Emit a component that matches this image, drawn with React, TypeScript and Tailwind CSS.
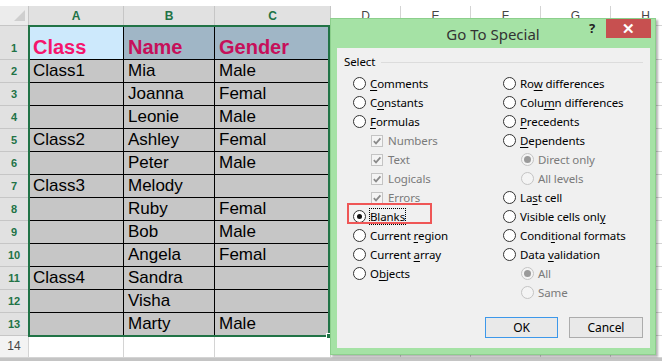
import clsx from 'clsx'

const dataRows = [
  ['Class1', 'Mia', 'Male'],
  ['', 'Joanna', 'Femal'],
  ['', 'Leonie', 'Male'],
  ['Class2', 'Ashley', 'Femal'],
  ['', 'Peter', 'Male'],
  ['Class3', 'Melody', ''],
  ['', 'Ruby', 'Femal'],
  ['', 'Bob', 'Male'],
  ['', 'Angela', 'Femal'],
  ['Class4', 'Sandra', ''],
  ['', 'Visha', ''],
  ['', 'Marty', 'Male'],
]

const colWidths = ['w-[95px]', 'w-[91px]', 'w-[116px]']
const otherCols = ['D', 'E', 'F', 'G', 'H']

type Item = {
  label: string
  u?: number
  kind: 'radio' | 'check' | 'sub'
  checked?: boolean
  disabled?: boolean
  focus?: boolean
  highlight?: boolean
}

const leftItems: Item[] = [
  { label: 'Comments', u: 0, kind: 'radio' },
  { label: 'Constants', u: 1, kind: 'radio' },
  { label: 'Formulas', u: 0, kind: 'radio' },
  { label: 'Numbers', kind: 'check', checked: true, disabled: true },
  { label: 'Text', kind: 'check', checked: true, disabled: true },
  { label: 'Logicals', kind: 'check', checked: true, disabled: true },
  { label: 'Errors', kind: 'check', checked: true, disabled: true },
  { label: 'Blanks', u: 4, kind: 'radio', checked: true, focus: true, highlight: true },
  { label: 'Current region', u: 8, kind: 'radio' },
  { label: 'Current array', u: 8, kind: 'radio' },
  { label: 'Objects', u: 1, kind: 'radio' },
]

const rightItems: Item[] = [
  { label: 'Row differences', u: 2, kind: 'radio' },
  { label: 'Column differences', u: 4, kind: 'radio' },
  { label: 'Precedents', u: 0, kind: 'radio' },
  { label: 'Dependents', u: 0, kind: 'radio' },
  { label: 'Direct only', kind: 'sub', checked: true, disabled: true },
  { label: 'All levels', kind: 'sub', disabled: true },
  { label: 'Last cell', u: 2, kind: 'radio' },
  { label: 'Visible cells only', u: 17, kind: 'radio' },
  { label: 'Conditional formats', u: 5, kind: 'radio' },
  { label: 'Data validation', u: 5, kind: 'radio' },
  { label: 'All', kind: 'sub', checked: true, disabled: true },
  { label: 'Same', kind: 'sub', disabled: true },
]

function Label({ text, u }: { text: string; u?: number }) {
  if (u === undefined) return <>{text}</>
  return (
    <>
      {text.slice(0, u)}
      <span className="underline underline-offset-2">{text[u]}</span>
      {text.slice(u + 1)}
    </>
  )
}

function Radio({ checked, disabled }: { checked?: boolean; disabled?: boolean }) {
  return (
    <span
      className={clsx(
        'flex h-[13px] w-[13px] shrink-0 items-center justify-center rounded-full border',
        disabled ? 'border-[#c4c4c4] bg-[#f4f4f4]' : 'border-[#333] bg-white'
      )}
    >
      {checked &&
        (disabled ? (
          <span className="h-[7px] w-[7px] rounded-full bg-[#9a9a9a]" />
        ) : (
          <span className="h-[5px] w-[5px] rounded-full bg-[#111]" />
        ))}
    </span>
  )
}

function Check() {
  return (
    <span className="flex h-[12px] w-[12px] shrink-0 items-center justify-center border border-[#c4c4c4] bg-[#f4f4f4]">
      <svg width="10" height="10" viewBox="0 0 10 10">
        <path d="M1.8 5.2 L4 7.4 L8.4 2.4" fill="none" stroke="#8a8a8a" strokeWidth="1.7" />
      </svg>
    </span>
  )
}

function Option({ item }: { item: Item }) {
  return (
    <div
      className={clsx(
        'relative flex h-[19px] items-center',
        item.kind === 'check' ? 'gap-[5px] pl-[18px]' : item.kind === 'sub' ? 'gap-[4px] pl-[18px]' : 'gap-[4px]',
        item.disabled ? 'text-[#7a7a7a]' : 'text-black'
      )}
    >
      {item.kind === 'check' ? <Check /> : <Radio checked={item.checked} disabled={item.disabled} />}
      <span className={clsx('leading-[15px]', item.focus && '-ml-[1px] border border-dotted border-black')}>
        <Label text={item.label} u={item.u} />
      </span>
      {item.highlight && (
        <div className="pointer-events-none absolute -left-[6px] -top-[4px] h-[21px] w-[85px] border-2 border-[#ef5656]" />
      )}
    </div>
  )
}

function Dialog() {
  return (
    <div className="absolute left-[330px] top-[18px] flex h-[337px] w-[326px] flex-col border border-[#8ccf8c] bg-[#a5e2a5] font-['Noto_Sans',sans-serif] shadow-[2px_2px_2px_rgba(0,0,0,0.3)]">
      {/* title bar */}
      <div className="grid h-[29px] grid-cols-[1fr_auto_1fr] items-center">
        <div />
        <div className="pt-[1px] text-[15px] text-[#333]">Go To Special</div>
        <div className="flex items-start justify-end self-start pr-[4px]">
          <div className="flex h-[19px] w-[20px] items-center justify-center text-[13px] font-bold text-[#222]">?</div>
          <div className="ml-[4px] flex h-[19px] w-[45px] items-center justify-center bg-[#c75050] text-[15px] font-bold leading-none text-white">
            ✕
          </div>
        </div>
      </div>

      {/* content */}
      <div className="mb-[6px] ml-[6px] mr-[5px] flex flex-1 flex-col bg-[#f0f0f0] text-[11.5px] tracking-[-0.1px]">
        <div className="mt-[5px] flex h-[18px] items-center pl-[7px] pr-[7px]">
          <span className="text-black">Select</span>
          <div className="ml-[6px] h-px flex-1 bg-[#dcdcdc]" />
        </div>

        <div className="mt-[3px] grid grid-cols-[166px_1fr]">
          <div className="flex flex-col pl-[16px]">
            {leftItems.map((it) => (
              <Option key={it.label} item={it} />
            ))}
          </div>
          <div className="flex flex-col">
            {rightItems.map((it) => (
              <Option key={it.label + it.kind} item={it} />
            ))}
          </div>
        </div>

        <div className="mt-[15px] flex justify-end gap-[11px] pr-[7px]">
          <button className="flex h-[21px] w-[73px] items-center justify-center border border-[#3d98ea] bg-[#e9e9e9] text-[12px] text-black">
            OK
          </button>
          <button className="flex h-[21px] w-[74px] items-center justify-center border border-[#acacac] bg-[#e9e9e9] text-[12px] text-black">
            Cancel
          </button>
        </div>
      </div>
    </div>
  )
}

export default function App() {
  return (
    <div className="relative h-[361px] w-[662px] overflow-hidden bg-white font-['Liberation_Sans',Arial,sans-serif]">
      <div className="h-[6px]" />

      {/* column headers */}
      <div className="flex h-[20px]">
        <div className="flex w-[29px] shrink-0 items-end justify-end border-r border-b border-[#c6c6c6] bg-[#ececec] pb-[4px] pr-[3px]">
          <svg width="11" height="11" viewBox="0 0 11 11">
            <polygon points="11,0 11,11 0,11" fill="#cfcfcf" />
          </svg>
        </div>
        {['A', 'B', 'C'].map((c, i) => (
          <div
            key={c}
            className={clsx(
              colWidths[i],
              'flex shrink-0 items-center justify-center border-r border-[#c6c6c6] bg-[#e1e1e1] text-[12px] font-bold text-[#217346]'
            )}
          >
            {c}
          </div>
        ))}
        {otherCols.map((c) => (
          <div
            key={c}
            className="flex w-[70px] shrink-0 items-center justify-center border-r border-b border-[#d4d4d4] text-[12px] text-[#444]"
          >
            {c}
          </div>
        ))}
      </div>

      {/* row 1 */}
      <div className="flex h-[34px]">
        <div className="flex w-[29px] shrink-0 items-end justify-center border-r border-b border-[#c6c6c6] bg-[#e1e1e1] pb-[4px] text-[11px] font-bold leading-[13px] text-[#217346]">
          1
        </div>
        <div className="flex w-[95px] shrink-0 items-end border-r border-b border-black bg-[#cde9fc] pb-[1px] pl-[4px] text-[20px] font-bold leading-[22px] text-[#f5156c]">
          Class
        </div>
        <div className="flex w-[91px] shrink-0 items-end border-r border-b border-black bg-[#a0b6c6] pb-[1px] pl-[4px] text-[20px] font-bold leading-[22px] text-[#c60f5a]">
          Name
        </div>
        <div className="flex w-[116px] shrink-0 items-end border-r border-b border-black bg-[#a0b6c6] pb-[1px] pl-[4px] text-[20px] font-bold leading-[22px] text-[#c60f5a]">
          Gender
        </div>
        {otherCols.map((c) => (
          <div key={c} className="w-[70px] shrink-0 border-r border-b border-[#d4d4d4]" />
        ))}
      </div>

      {/* rows 2-13 */}
      {dataRows.map((r, ri) => (
        <div key={ri} className="flex h-[23px]">
          <div className="flex w-[29px] shrink-0 items-end justify-center border-r border-b border-[#c6c6c6] bg-[#e1e1e1] pb-[4px] text-[11px] font-bold leading-[13px] text-[#217346]">
            {ri + 2}
          </div>
          {r.map((v, ci) => (
            <div
              key={ci}
              className={clsx(
                colWidths[ci],
                'flex shrink-0 items-center border-r border-b border-black bg-[#c6c6c6] pl-[4px] text-[17px] leading-[22px] text-black'
              )}
            >
              {v}
            </div>
          ))}
          {otherCols.map((c) => (
            <div key={c} className="w-[70px] shrink-0 border-r border-b border-[#d4d4d4]" />
          ))}
        </div>
      ))}

      {/* row 14 */}
      <div className="flex h-[22px]">
        <div className="flex w-[29px] shrink-0 items-end justify-center border-r border-b border-[#d4d4d4] bg-[#f3f3f3] pb-[4px] text-[12px] leading-[13px] text-[#444]">
          14
        </div>
        {colWidths.map((w) => (
          <div key={w} className={clsx(w, 'shrink-0 border-r border-b border-[#d4d4d4]')} />
        ))}
        {otherCols.map((c) => (
          <div key={c} className="w-[70px] shrink-0 border-r border-b border-[#d4d4d4]" />
        ))}
      </div>
      <div className="h-[3px] bg-[#c4c4c4]" />

      {/* selection outline */}
      <div className="pointer-events-none absolute left-[28px] top-[25px] h-[312px] w-[302px] border-2 border-[#217346]">
        <div className="absolute -bottom-[4px] -right-[4px] h-[6px] w-[6px] border border-white bg-[#217346]" />
      </div>

      <Dialog />
    </div>
  )
}
